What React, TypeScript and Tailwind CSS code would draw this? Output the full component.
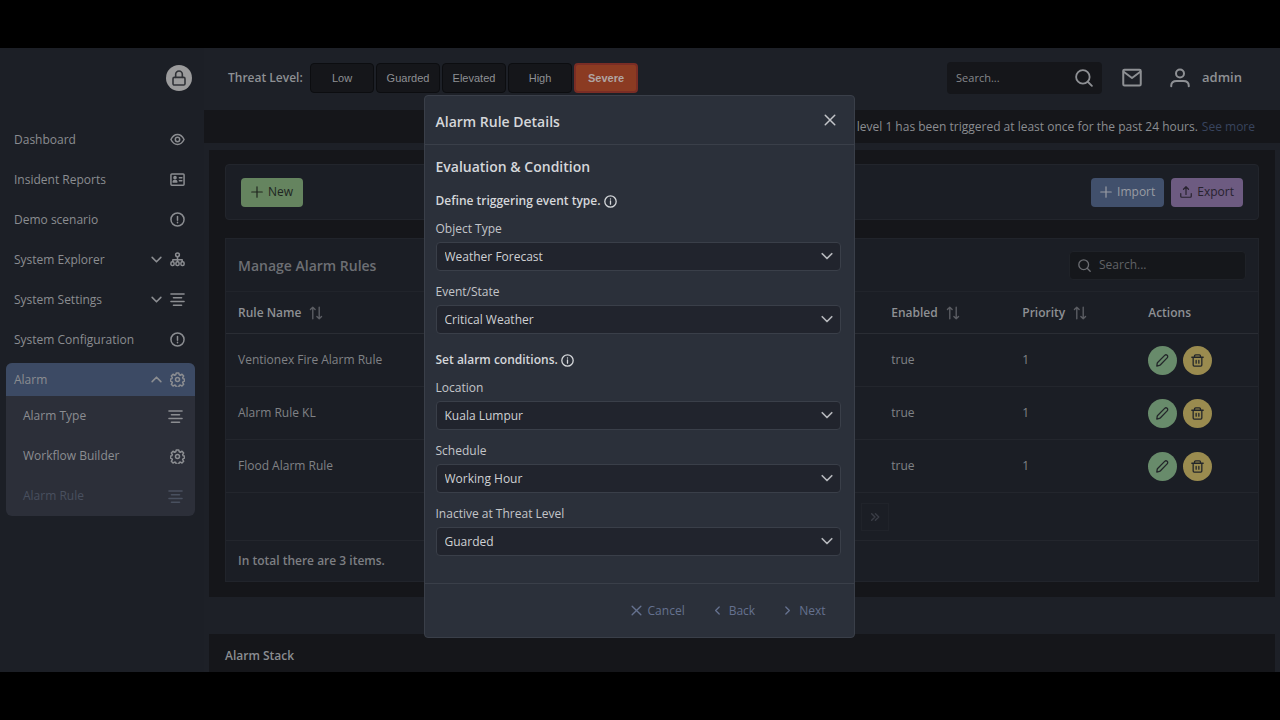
import { useState } from 'react'
import type { ReactNode } from 'react'

type IconProps = { className?: string }

function Svg({ className = 'size-4', children }: { className?: string; children: ReactNode }) {
  return (
    <svg
      viewBox="0 0 24 24"
      className={`shrink-0 ${className}`}
      fill="none"
      stroke="currentColor"
      strokeWidth="2.4"
      strokeLinecap="round"
      strokeLinejoin="round"
      aria-hidden="true"
    >
      {children}
    </svg>
  )
}

const EyeIcon = ({ className }: IconProps) => (
  <Svg className={className}>
    <path d="M1.500 12C4 7 7.500 4 12 4s8 3 10.500 8c-2.500 5-6 8-10.500 8S4 17 1.500 12z" />
    <circle cx="12" cy="12" r="3.500" />
  </Svg>
)

const IdCardIcon = ({ className }: IconProps) => (
  <Svg className={className}>
    <rect x="1.500" y="3" width="21" height="18" rx="1.500" />
    <circle cx="8" cy="9" r="1.700" fill="currentColor" />
    <path d="M5 16c0-3 6-3 6 0zM15 9h4M15 14h4" />
  </Svg>
)

const AlertIcon = ({ className }: IconProps) => (
  <Svg className={className}>
    <circle cx="12" cy="12" r="10.500" />
    <path d="M12 7v6M12 16.500v.5" />
  </Svg>
)

const InfoIcon = ({ className }: IconProps) => (
  <Svg className={className}>
    <circle cx="12" cy="12" r="10.500" />
    <path d="M12 11v6M12 7v.5" />
  </Svg>
)

const SitemapIcon = ({ className }: IconProps) => (
  <Svg className={className}>
    <circle cx="12" cy="4.500" r="3" />
    <path d="M12 8v7M4.500 15v-2.500h15V15" />
    <rect x="1.500" y="15.500" width="5" height="6" rx="2" />
    <rect x="9.500" y="15.500" width="5" height="6" rx="2" />
    <rect x="17.500" y="15.500" width="5" height="6" rx="2" />
  </Svg>
)

const AlignIcon = ({ className }: IconProps) => (
  <Svg className={className}>
    <path d="M1.500 3h21M5.500 9h13M1.500 15h21M5.500 21h13" />
  </Svg>
)

const CogIcon = ({ className }: IconProps) => (
  <Svg className={className}>
    <path d="M10 1.500h4l.8 3 1.700.7 2.700-1.600 2.700 2.700-1.600 2.800.7 1.600 2.700.8v3l-2.700.9-.7 1.600 1.600 2.700-2.700 2.700-2.700-1.500-1.700.7-.8 2.900h-4l-.8-2.900-1.700-.7-2.700 1.500-2.700-2.700 1.600-2.700-.7-1.600-2.700-.9v-3l2.700-.8.7-1.600-1.600-2.800 2.700-2.700 2.700 1.600 1.700-.7z" />
    <circle cx="12" cy="12" r="3.200" />
  </Svg>
)

const LockIcon = ({ className }: IconProps) => (
  <Svg className={className}>
    <rect x="3" y="11" width="18" height="11.500" rx="2" />
    <path d="M7 11V6.500a5 5 0 0 1 10 0V11" />
  </Svg>
)

const SearchIcon = ({ className }: IconProps) => (
  <Svg className={className}>
    <circle cx="10.500" cy="10.500" r="9" />
    <path d="M17 17l5.500 5.500" />
  </Svg>
)

const MailIcon = ({ className }: IconProps) => (
  <Svg className={className}>
    <rect x="1.500" y="2" width="21" height="19" rx="1.500" />
    <path d="M2 4.500L12 12l10-7.500" />
  </Svg>
)

const UserIcon = ({ className }: IconProps) => (
  <Svg className={className}>
    <circle cx="12" cy="6.500" r="4.800" />
    <path d="M1.500 22v-1C1.500 17 4.500 15.500 8 15.500h8c3.500 0 6.500 1.500 6.500 5.500v1" />
  </Svg>
)

const PlusIcon = ({ className }: IconProps) => (
  <Svg className={className}>
    <path d="M12 1.500v21M1.500 12h21" />
  </Svg>
)

const UploadIcon = ({ className }: IconProps) => (
  <Svg className={className}>
    <path d="M12 17V2M7 6.500L12 1.500l5 5M1.500 15v5.500a2 2 0 0 0 2 2h17a2 2 0 0 0 2-2V15" />
  </Svg>
)

const SortIcon = ({ className }: IconProps) => (
  <Svg className={className}>
    <path d="M6.500 22V2M2.500 6l4-4 4 4M17.500 2v20M13.500 18l4 4 4-4" />
  </Svg>
)

const PencilIcon = ({ className }: IconProps) => (
  <Svg className={className}>
    <path d="M1.500 22.500l.8-5.500c.1-.6.3-1 .7-1.400L16 2.600c1.400-1.400 3.300-1.400 4.600-.2 1.400 1.300 1.400 3.300 0 4.700L7.800 20.300c-.4.4-.8.6-1.300.7z" />
  </Svg>
)

const TrashIcon = ({ className }: IconProps) => (
  <Svg className={className}>
    <path d="M1.500 6h21M4 6v14.500a2 2 0 0 0 2 2h12a2 2 0 0 0 2-2V6M6.500 6V3.500a2 2 0 0 1 2-2h7a2 2 0 0 1 2 2V6M9.500 12v5M14.500 12v5" />
  </Svg>
)

const TimesIcon = ({ className }: IconProps) => (
  <Svg className={className}>
    <path strokeWidth="3" d="M2.500 2.500l19 19M21.500 2.500l-19 19" />
  </Svg>
)

const ChevronIcon = ({ className }: IconProps) => (
  <Svg className={className}>
    <path strokeWidth="3.500" d="M2.500 7.500l9.500 9.500 9.500-9.500" />
  </Svg>
)

const DoubleRightIcon = ({ className }: IconProps) => (
  <Svg className={className}>
    <path strokeWidth="3.500" d="M4 4l8 8-8 8M13 4l8 8-8 8" />
  </Svg>
)

const menu = [
  { label: 'Dashboard', icon: EyeIcon },
  { label: 'Insident Reports', icon: IdCardIcon },
  { label: 'Demo scenario', icon: AlertIcon },
  { label: 'System Explorer', icon: SitemapIcon, nested: true },
  { label: 'System Settings', icon: AlignIcon, nested: true },
  { label: 'System Configuration', icon: AlertIcon },
]

const threatLevels = ['Low', 'Guarded', 'Elevated', 'High', 'Severe']

const rules = ['Ventionex Fire Alarm Rule', 'Alarm Rule KL', 'Flood Alarm Rule']

function Sidebar() {
  return (
    <aside className="w-[204px] shrink-0 bg-[#1c1f26] pr-[9px] pl-[6px] text-[#8b8d91]">
      <div className="flex h-[75px] items-start justify-end pt-[17px] pr-[3px]">
        <span className="flex size-[26px] items-center justify-center rounded-full bg-[#9b9b9c] text-[#303237]">
          <LockIcon className="size-4" />
        </span>
      </div>
      <nav aria-label="Main" className="flex flex-col gap-[7px]">
        {menu.map(({ label, icon: Icon, nested }) => (
          <a key={label} href="#" className="flex h-[33px] items-center gap-2 pr-[10px] pl-2">
            <span className="grow">{label}</span>
            {nested && <ChevronIcon className="size-[11px]" />}
            <Icon className="size-[15px]" />
          </a>
        ))}
        <div className="overflow-hidden rounded-md bg-[#2c2f39]">
          <a href="#" className="flex h-[33px] items-center gap-2 bg-[#3c4a64] pr-[10px] pl-2">
            <span className="grow">Alarm</span>
            <ChevronIcon className="size-[11px] rotate-180" />
            <CogIcon className="size-[15px]" />
          </a>
          <a href="#" className="flex h-10 items-center justify-between pr-3 pl-[17px]">
            Alarm Type
            <AlignIcon className="size-[15px]" />
          </a>
          <a href="#" className="flex h-10 items-center justify-between pr-[10px] pl-[17px]">
            Workflow Builder
            <CogIcon className="size-[15px]" />
          </a>
          <a
            href="#"
            className="flex h-10 items-center justify-between pr-3 pl-[17px] text-[#49505f]"
          >
            Alarm Rule
            <AlignIcon className="size-[15px]" />
          </a>
        </div>
      </nav>
    </aside>
  )
}

function TopBar() {
  const [level, setLevel] = useState('Severe')

  return (
    <header className="flex h-[62px] items-center bg-[#1d2027] pr-[38px] pb-[2px] pl-6 text-[#8e9094]">
      <span className="w-[82px] font-semibold">Threat Level:</span>
      <div className="flex gap-[2px] font-['Liberation_Sans',Arial,sans-serif] text-[11px]">
        {threatLevels.map((name) => (
          <button
            key={name}
            type="button"
            onClick={() => setLevel(name)}
            className={
              name === level
                ? 'h-[30px] w-16 rounded border-2 border-[#7a2d25] bg-[#8b3b22] font-bold text-[#b0a5a2]'
                : 'h-[30px] w-16 rounded border border-[#0c0d10] bg-[#15161a]'
            }
          >
            {name}
          </button>
        ))}
      </div>
      <div className="ml-auto flex h-8 w-[155px] items-center rounded-sm bg-[#15161a] pr-[9px] pl-[9px]">
        <input
          aria-label="Search"
          placeholder="Search..."
          className="min-w-0 grow bg-transparent text-[11px] outline-none placeholder:text-[#85878b]"
        />
        <SearchIcon className="size-[18px]" />
      </div>
      <button type="button" aria-label="Messages" className="ml-5">
        <MailIcon className="size-5" />
      </button>
      <button type="button" className="ml-7 flex items-center gap-3 text-[13px] font-semibold">
        <UserIcon className="size-5" />
        admin
      </button>
    </header>
  )
}

function RulesTable() {
  return (
    <section className="mt-[18px] border border-[#21242b] bg-[#1b1e25]">
      <div className="flex h-[52px] items-center justify-between pr-3 pl-3">
        <h2 className="text-[14px] font-semibold text-[#6d6f74]">Manage Alarm Rules</h2>
        <label className="flex h-[29px] w-[177px] items-center gap-2 rounded-sm border border-[#1f2228] bg-[#15171b] px-2 text-[#6b6d72]">
          <SearchIcon className="size-[13px]" />
          <input
            aria-label="Search rules"
            placeholder="Search..."
            className="min-w-0 grow bg-transparent outline-none placeholder:text-[#606266]"
          />
        </label>
      </div>
      <table className="w-full table-fixed border-collapse text-left text-[#808286]">
        <thead>
          <tr className="h-[42px] border-t border-b border-t-[#21242b] border-b-[#2a2d34] text-[#8e9094]">
            <th className="w-[63.300%] pl-3 font-semibold">
              <span className="flex items-center gap-2">
                Rule Name
                <SortIcon className="size-[14px] text-[#5b5d63]" />
              </span>
            </th>
            <th className="w-[12.700%] pl-3 font-semibold">
              <span className="flex items-center gap-2">
                Enabled
                <SortIcon className="size-[14px] text-[#5b5d63]" />
              </span>
            </th>
            <th className="w-[12.200%] pl-3 font-semibold">
              <span className="flex items-center gap-2">
                Priority
                <SortIcon className="size-[14px] text-[#5b5d63]" />
              </span>
            </th>
            <th className="pl-3 font-semibold">Actions</th>
          </tr>
        </thead>
        <tbody>
          {rules.map((rule) => (
            <tr key={rule} className="h-[53px] border-b border-[#23262d]">
              <td className="pl-3">{rule}</td>
              <td className="pl-3">true</td>
              <td className="pl-3">1</td>
              <td className="pl-3">
                <div className="flex gap-[6px] text-[#23262a]">
                  <button
                    type="button"
                    aria-label={`Edit ${rule}`}
                    className="flex size-[29px] items-center justify-center rounded-full bg-[#688b6b]"
                  >
                    <PencilIcon className="size-[13px]" />
                  </button>
                  <button
                    type="button"
                    aria-label={`Delete ${rule}`}
                    className="flex size-[29px] items-center justify-center rounded-full bg-[#9a8b4f]"
                  >
                    <TrashIcon className="size-[13px]" />
                  </button>
                </div>
              </td>
            </tr>
          ))}
        </tbody>
      </table>
      <nav aria-label="Pages" className="flex h-12 items-center border-b border-[#23262d]">
        <div className="mx-auto flex w-[294px] justify-end text-[#3a3d46]">
          <button
            type="button"
            aria-label="Last page"
            className="flex size-7 items-center justify-center border border-[#20232a]"
          >
            <DoubleRightIcon className="size-[10px]" />
          </button>
        </div>
      </nav>
      <p className="flex h-10 items-center pl-3 font-semibold text-[#7d7f83]">
        In total there are 3 items.
      </p>
    </section>
  )
}

function SelectField({ id, label, options }: { id: string; label: string; options: string[] }) {
  return (
    <div className="mb-[11px]">
      <label htmlFor={id} className="mb-[3px] block h-5 leading-5">
        {label}
      </label>
      <div className="relative">
        <select
          id={id}
          className="block h-[29px] w-full appearance-none rounded-sm border border-[#3a3f49] bg-[#21242d] px-2 text-[#cfd1d4] outline-none"
        >
          {options.map((option) => (
            <option key={option}>{option}</option>
          ))}
        </select>
        <ChevronIcon className="pointer-events-none absolute top-2 right-2 size-3 text-[#b5b7bb]" />
      </div>
    </div>
  )
}

function RuleDialog() {
  return (
    <div
      role="dialog"
      aria-labelledby="dialog-title"
      className="w-[431px] rounded-sm border border-[#3a3f49] bg-[#2b303a] text-[#c3c5c9]"
    >
      <div className="flex h-[49px] items-center justify-between border-b border-[#3a3f49] pr-[18px] pl-[11px]">
        <h2 id="dialog-title" className="pt-[2px] text-[14px] font-semibold text-[#d5d7da]">
          Alarm Rule Details
        </h2>
        <button type="button" aria-label="Close">
          <TimesIcon className="size-3" />
        </button>
      </div>
      <form className="pt-3 pr-[13px] pb-4 pl-[11px]">
        <h3 className="mb-[14px] text-[14px] leading-5 font-semibold text-[#d5d7da]">
          Evaluation &amp; Condition
        </h3>
        <p className="mb-2 flex h-5 items-center gap-[3px] font-semibold text-[#d5d7da]">
          Define triggering event type.
          <InfoIcon className="size-[13px]" />
        </p>
        <SelectField id="object-type" label="Object Type" options={['Weather Forecast']} />
        <SelectField id="event-state" label="Event/State" options={['Critical Weather']} />
        <p className="mt-4 mb-2 flex h-5 items-center gap-[3px] font-semibold text-[#d5d7da]">
          Set alarm conditions.
          <InfoIcon className="size-[13px]" />
        </p>
        <SelectField id="location" label="Location" options={['Kuala Lumpur']} />
        <SelectField id="schedule" label="Schedule" options={['Working Hour']} />
        <SelectField
          id="inactive-level"
          label="Inactive at Threat Level"
          options={['Guarded', 'Low', 'Elevated', 'High', 'Severe']}
        />
      </form>
      <div className="flex h-[54px] items-center justify-end gap-7 border-t border-[#3a3f49] pr-7 text-[#65718f]">
        <button type="button" className="flex items-center gap-[6px]">
          <TimesIcon className="size-[11px]" />
          Cancel
        </button>
        <button type="button" className="flex items-center gap-[7px]">
          <ChevronIcon className="size-[9px] rotate-90" />
          Back
        </button>
        <button type="button" className="flex items-center gap-[7px]">
          <ChevronIcon className="size-[9px] -rotate-90" />
          Next
        </button>
      </div>
    </div>
  )
}

export default function App() {
  return (
    <div className="h-screen bg-black py-12 font-['Open_Sans',sans-serif] text-[12px]">
      <div className="relative flex h-full overflow-hidden bg-[#1d2027]">
        <Sidebar />
        <main className="min-w-0 grow">
          <TopBar />
          <p className="flex h-[33px] items-center justify-end gap-1 bg-[#15161a] pr-[25px] text-[#8b8d91]">
            Threat level 1 has been triggered at least once for the past 24 hours.
            <a href="#" className="text-[#38445e]">
              See more
            </a>
          </p>
          <div className="mt-[7px] mr-[5px] ml-[5px] bg-[#15161a] px-4 pt-[14px] pb-[15px]">
            <div className="flex h-[56px] items-center gap-[7px] rounded border border-[#22252c] bg-[#1b1e25] px-[15px]">
              <button
                type="button"
                className="mr-auto flex h-[29px] items-center gap-[5px] rounded-sm bg-[#65845f] px-[10px] text-[#20251f]"
              >
                <PlusIcon className="size-3" />
                New
              </button>
              <button
                type="button"
                className="flex h-[29px] items-center gap-[5px] rounded-sm bg-[#41506c] px-[9px] text-[#999ca3]"
              >
                <PlusIcon className="size-3" />
                Import
              </button>
              <button
                type="button"
                className="flex h-[29px] items-center gap-[5px] rounded-sm bg-[#6d5b81] px-[9px] text-[#27222e]"
              >
                <UploadIcon className="size-3" />
                Export
              </button>
            </div>
            <RulesTable />
          </div>
          <h2 className="mt-[37px] mr-[5px] ml-[5px] h-40 bg-[#15161a] pt-[13px] pl-4 font-semibold text-[#8b8d91]">
            Alarm Stack
          </h2>
        </main>
        <div className="absolute inset-x-0 top-[47px] flex justify-center pr-[2px]">
          <RuleDialog />
        </div>
      </div>
    </div>
  )
}
